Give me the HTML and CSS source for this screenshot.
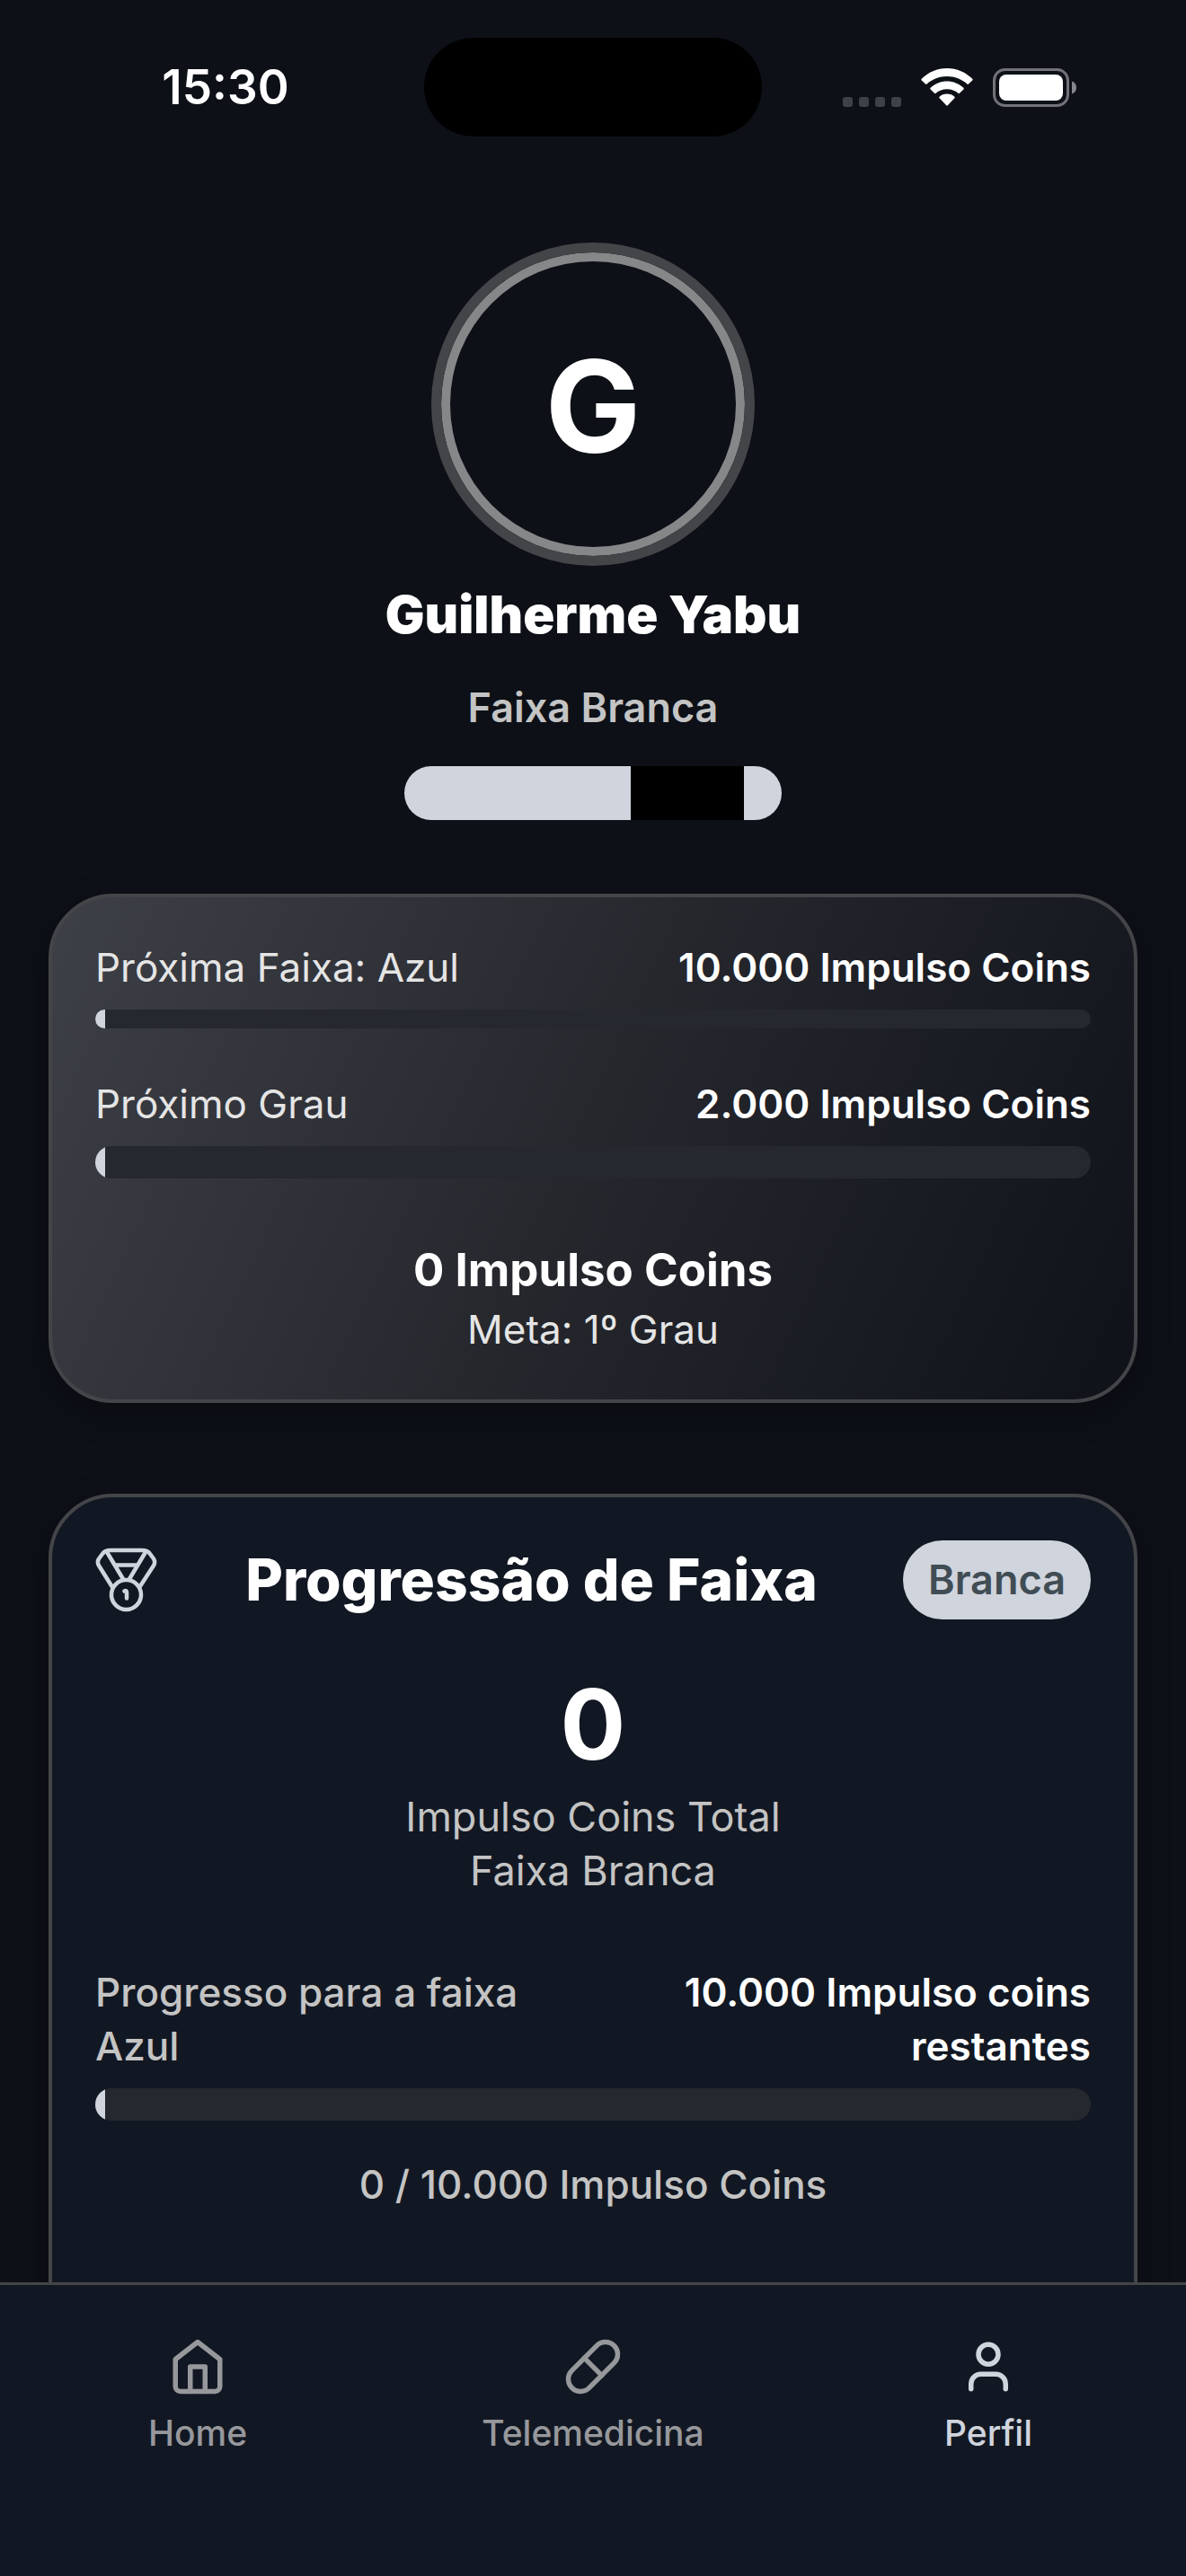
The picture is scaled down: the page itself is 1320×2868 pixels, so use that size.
FILE: index.html
```html
<!DOCTYPE html>
<html lang="pt-BR">
<head>
    <meta charset="UTF-8">
    <meta name="viewport" content="width=device-width, initial-scale=1.0">
    <title>Perfil</title>
    <link rel="stylesheet" href="styles.css">
</head>
<body>
    <header class="status-bar">
        <time class="clock">15:30</time>
        <div class="island"></div>
        <div class="status-icons">
            <svg class="signal" width="65" height="11" viewBox="0 0 65 11" fill="#3e4146">
                <rect width="11" height="11" rx="3"/>
                <rect x="18" width="11" height="11" rx="3"/>
                <rect x="36" width="11" height="11" rx="3"/>
                <rect x="54" width="11" height="11" rx="3"/>
            </svg>
            <svg width="58" height="42" viewBox="0 0 58 42" fill="#fff">
                <path d="M29 0C40 0 50 4.500 57.300 11.800Q58 12.600 57.300 13.400L53 17.600Q52.200 18.300 51.400 17.600C45.400 12 37.600 9 29 9S12.600 12 6.600 17.600Q5.800 18.300 5 17.600L.7 13.400Q0 12.600 .7 11.800C8 4.500 18 0 29 0Z"/>
                <path d="M29 14.500C36 14.500 42.500 17.200 47.400 21.800Q48.200 22.700 47.400 23.500L43 27.800Q42.200 28.500 41.400 27.800C38 24.800 33.800 23.200 29 23.200S20 24.800 16.600 27.800Q15.800 28.500 15 27.800L10.600 23.500Q9.800 22.700 10.600 21.800C15.500 17.200 22 14.500 29 14.500Z"/>
                <path d="M29 28.500C32.300 28.500 35.200 29.700 37.400 31.700Q38.200 32.500 37.400 33.300L29.800 41.300Q29 42 28.200 41.300L20.600 33.300Q19.800 32.500 20.600 31.700C22.800 29.700 25.700 28.500 29 28.500Z"/>
            </svg>
            <svg width="93" height="43" viewBox="0 0 93 43">
                <rect x="1.500" y="1.500" width="82" height="40" rx="12" fill="none" stroke="#717377" stroke-width="3"/>
                <rect x="7" y="7" width="71" height="29" rx="8" fill="#fff"/>
                <path d="M88 14.500C91 15.500 93 18 93 21.500S91 27.500 88 28.500Z" fill="#86888b"/>
            </svg>
        </div>
    </header>

    <main class="content">
        <section class="profile">
            <div class="avatar">G</div>
            <h1 class="name">Guilherme Yabu</h1>
            <p class="rank">Faixa Branca</p>
            <div class="belt"><span class="belt-tip"></span></div>
        </section>

        <section class="card summary">
            <div class="row">
                <span class="label">Próxima Faixa: Azul</span>
                <strong>10.000 Impulso Coins</strong>
            </div>
            <div class="bar thin"><div class="fill" style="width: 1%"></div></div>
            <div class="row next">
                <span class="label">Próximo Grau</span>
                <strong>2.000 Impulso Coins</strong>
            </div>
            <div class="bar"><div class="fill" style="width: 1%"></div></div>
            <p class="coins">0 Impulso Coins</p>
            <p class="goal">Meta: 1º Grau</p>
        </section>

        <section class="card progression">
            <div class="card-header">
                <svg class="medal" viewBox="0 0 72 72" fill="none" stroke="currentColor" stroke-width="4.500" stroke-linecap="round" stroke-linejoin="round">
                    <path d="M19 44 4 20C2.500 17.500 2.500 15 4 12.500L8 7C10 4 13 3 17 3H52C56 3 59 4 61 7L65 12.500C66.500 15 66.500 17.500 65 20L50 43"/>
                    <path d="M13 5 31 35M56 5 38 35M23 19.500H46"/>
                    <circle cx="34.500" cy="52.500" r="16.500"/>
                    <path d="M32.500 48.500Q35 47 35 50V56.500"/>
                </svg>
                <h2>Progressão de Faixa</h2>
                <span class="badge">Branca</span>
            </div>
            <p class="total">0</p>
            <p class="caption">Impulso Coins Total</p>
            <p class="caption">Faixa Branca</p>
            <div class="row progress-row">
                <span class="label">Progresso para a faixa Azul</span>
                <strong>10.000 Impulso coins restantes</strong>
            </div>
            <div class="bar"><div class="fill" style="width: 1%"></div></div>
            <p class="count">0 / 10.000 Impulso Coins</p>
        </section>
    </main>

    <nav class="tabs">
        <a href="#home">
            <svg viewBox="0 0 24 24"><path d="m3 9 9-7 9 7v11a2 2 0 0 1-2 2H5a2 2 0 0 1-2-2Z"/><path d="M9 22V12h6v10"/></svg>
            Home
        </a>
        <a href="#telemedicina">
            <svg viewBox="0 0 24 24"><path d="m10.500 20.500 10-10a4.950 4.950 0 1 0-7-7l-10 10a4.950 4.950 0 1 0 7 7Z"/><path d="m8.500 8.500 7 7"/></svg>
            Telemedicina
        </a>
        <a href="#perfil" class="active">
            <svg viewBox="0 0 24 24"><path d="M19 21v-2a4 4 0 0 0-4-4H9a4 4 0 0 0-4 4v2"/><circle cx="12" cy="7" r="4"/></svg>
            Perfil
        </a>
    </nav>
</body>
</html>
```
FILE: styles.css
```css
* {
    box-sizing: border-box;
}

body {
    margin: 0;
    height: 100vh;
    display: flex;
    flex-direction: column;
    background-color: #0d1017;
    color: #ffffff;
    font-family: Inter, sans-serif;
    font-size: 45px;
    line-height: 60px;
}

h1, h2, p {
    margin: 0;
}

/* Status bar */
.status-bar {
    display: grid;
    grid-template-columns: 1fr 376px 1fr;
    align-items: center;
    flex-shrink: 0;
    padding: 42px 0;
}

.clock {
    text-align: center;
    font-size: 53px;
    font-weight: 600;
    padding-left: 30px;
}

.island {
    height: 110px;
    border-radius: 55px;
    background-color: #000000;
}

.status-icons {
    display: flex;
    align-items: center;
    justify-content: center;
    gap: 22px;
    padding-right: 32px;
}

.signal {
    align-self: flex-end;
}

/* Profile */
.content {
    flex: 1;
    min-height: 0;
    overflow-y: auto;
    scrollbar-width: none;
    padding: 76px 54px 0;
}

.profile {
    display: flex;
    flex-direction: column;
    align-items: center;
}

.avatar {
    display: flex;
    align-items: center;
    justify-content: center;
    width: 360px;
    height: 360px;
    padding-top: 4px;
    border: 11px solid #444548;
    border-radius: 50%;
    box-shadow: inset 0 0 0 10px #868789;
    font-size: 142px;
    font-weight: 700;
}

.name {
    margin-top: 18px;
    font-size: 58px;
    font-weight: 900;
    line-height: 72px;
}

.rank {
    margin-top: 38px;
    color: #c4c4c4;
    font-weight: 600;
}

.belt {
    display: flex;
    justify-content: flex-end;
    width: 420px;
    height: 60px;
    margin-top: 35px;
    padding-right: 42px;
    border-radius: 30px;
    background-color: #d0d4dd;
}

.belt-tip {
    width: 126px;
    background-color: #000000;
}

/* Cards */
.card {
    border: 4px solid #444548;
    border-radius: 72px;
    padding: 48px;
    box-shadow: 0 12px 36px rgba(0, 0, 0, 0.3);
}

.summary {
    margin-top: 82px;
    background: linear-gradient(115deg, #3e4047, #25272d 50%, #10121a);
    text-align: center;
}

.row {
    display: flex;
    justify-content: space-between;
    gap: 48px;
    margin-bottom: 17px;
    font-size: 44px;
    text-align: left;
}

.row strong {
    font-weight: 600;
    text-align: right;
}

.label {
    color: #e5e5e5;
}

.next {
    margin-top: 54px;
}

.bar {
    height: 36px;
    border-radius: 18px;
    background-color: #26282f;
    overflow: hidden;
}

.bar.thin {
    height: 21px;
}

.fill {
    height: 100%;
    background-color: #d0d4dd;
}

.coins {
    margin-top: 66px;
    font-size: 51px;
    font-weight: 700;
    line-height: 72px;
}

.goal {
    color: #e5e5e5;
    font-size: 44px;
}

.progression {
    margin-top: 101px;
    padding-bottom: 180px;
    background-color: #121823;
    text-align: center;
}

.card-header {
    display: flex;
    align-items: center;
    justify-content: space-between;
}

.card-header h2 {
    font-size: 64px;
    font-weight: 800;
}

.medal {
    width: 72px;
    height: 72px;
    color: #d0d4dd;
}

.badge {
    padding: 14px 28px;
    border-radius: 44px;
    background-color: #d0d4dd;
    color: #404d55;
    font-weight: 600;
}

.total {
    margin: 48px 0 4px;
    font-size: 108px;
    font-weight: 700;
    line-height: 138px;
}

.caption {
    color: #c4c4c4;
}

.progress-row {
    margin-top: 75px;
}

.progress-row .label {
    width: 500px;
    color: #c4c4c4;
    font-weight: 500;
}

.progress-row strong {
    width: 500px;
}

.count {
    margin-top: 41px;
    color: #c4c4c4;
    font-size: 44px;
    font-weight: 500;
}

/* Tab bar */
.tabs {
    display: grid;
    grid-template-columns: repeat(3, 1fr);
    flex-shrink: 0;
    padding: 58px 0 135px;
    border-top: 3px solid #444548;
    background-color: #121823;
}

.tabs a {
    display: flex;
    flex-direction: column;
    align-items: center;
    gap: 17px;
    color: #97989c;
    font-size: 39px;
    font-weight: 500;
    line-height: 48px;
    text-decoration: none;
}

.tabs .active {
    color: #d0d4dd;
}

.tabs svg {
    width: 66px;
    height: 66px;
    fill: none;
    stroke: currentColor;
    stroke-width: 2;
    stroke-linecap: round;
    stroke-linejoin: round;
}
```
